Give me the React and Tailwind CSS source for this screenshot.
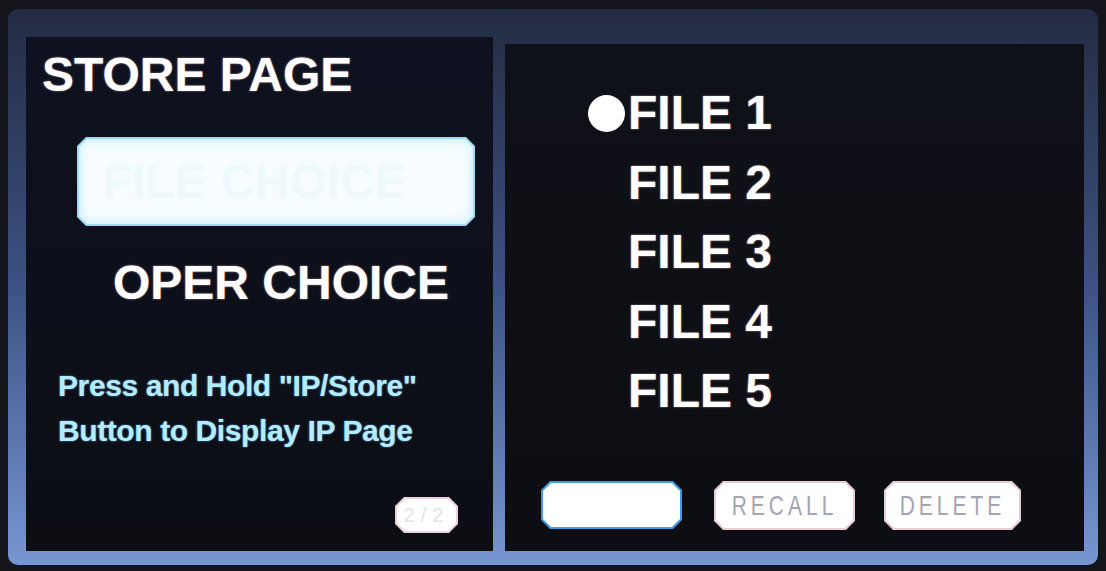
import React from 'react';

const files = ['FILE 1', 'FILE 2', 'FILE 3', 'FILE 4', 'FILE 5'];

const glow = '[text-shadow:0_0_2px_rgba(255,190,200,0.7)]';

// chamfered box: outer edge colour + inner fill
const Chamfer = ({ edge, fill, className, children }) => (
  <div
    className={`${edge} p-[2px] [clip-path:polygon(9px_0,calc(100%_-_9px)_0,100%_9px,100%_calc(100%_-_9px),calc(100%_-_9px)_100%,9px_100%,0_calc(100%_-_9px),0_9px)] ${className}`}
  >
    <div
      className={`${fill} w-full h-full flex items-center justify-center [clip-path:polygon(8px_0,calc(100%_-_8px)_0,100%_8px,100%_calc(100%_-_8px),calc(100%_-_8px)_100%,8px_100%,0_calc(100%_-_8px),0_8px)]`}
    >
      {children}
    </div>
  </div>
);

const App = () => {
  return (
    <div className="w-[1106px] h-[571px] bg-[#13151b] pt-[9px] pl-[8px] pr-[8px] pb-[6px] font-['Liberation_Sans',Arial,sans-serif]">
      <div className="w-full h-full rounded-[10px] bg-gradient-to-b from-[#232c43] via-[#3d5283] to-[#7896d2] pt-[28px] pl-[18px] pr-[14px] pb-[14px] flex gap-[12px]">
        {/* left panel */}
        <div className="w-[467px] h-full bg-gradient-to-b from-[#0e1220] to-[#0c0e14] flex flex-col">
          <div className={`pl-[16px] pt-[14px] text-[48px] leading-[48px] font-bold text-white ${glow}`}>
            STORE PAGE
          </div>

          <div className="pl-[51px] mt-[38px]">
            <Chamfer
              edge="bg-[#9ddcf0]"
              fill="bg-[#f7fdff] shadow-[inset_0_0_12px_#b4e8f8]"
              className="w-[398px] h-[89px]"
            >
              <span className="text-[48px] leading-[48px] font-bold text-[#eef9fc] -ml-[42px]">
                FILE CHOICE
              </span>
            </Chamfer>
          </div>

          <div className={`pl-[87px] mt-[33px] text-[48px] leading-[48px] font-bold text-white ${glow}`}>
            OPER CHOICE
          </div>

          <div className="pl-[32px] mt-[56px] text-[30px] leading-[45px] font-bold text-[#b4ecff] tracking-[-0.4px] [text-shadow:0_0_2px_rgba(120,200,255,0.8)]">
            <div>Press and Hold "IP/Store"</div>
            <div>Button to Display IP Page</div>
          </div>

          <div className="mt-auto flex justify-end pr-[35px] pb-[18px]">
            <Chamfer edge="bg-[#ecd0da]" fill="bg-white" className="w-[63px] h-[36px]">
              <span className="text-[20px] text-[#e2e2e8] tracking-[6px]">2/2</span>
            </Chamfer>
          </div>
        </div>

        {/* right panel */}
        <div className="flex-1 mt-[7px] bg-gradient-to-b from-[#0f1118] to-[#0d0e13] flex flex-col">
          <div className="flex flex-col pt-[45px] gap-[21.5px]">
            {files.map((f, i) => (
              <div key={f} className="flex items-center h-[48px]">
                <div className="w-[123px] flex justify-end pr-[3px]">
                  {i === 0 && <div className="w-[37px] h-[37px] rounded-full bg-white" />}
                </div>
                <span className={`text-[48px] leading-[48px] font-bold text-white ${glow}`}>{f}</span>
              </div>
            ))}
          </div>

          <div className="mt-auto flex pl-[36px] pb-[21px]">
            <Chamfer edge="bg-[#3c9ae8]" fill="bg-white" className="w-[141px] h-[48px]">
              <span className="text-[22px] text-white">STORE</span>
            </Chamfer>
            <Chamfer edge="bg-[#e8ccd4]" fill="bg-white" className="w-[141px] h-[49px] ml-[32px]">
              <span className="text-[21px] font-light text-[#a4a4b2] tracking-[4px] scale-y-[1.3]">RECALL</span>
            </Chamfer>
            <Chamfer edge="bg-[#e8ccd4]" fill="bg-white" className="w-[137px] h-[49px] ml-[29px]">
              <span className="text-[21px] font-light text-[#a4a4b2] tracking-[4px] scale-y-[1.3]">DELETE</span>
            </Chamfer>
          </div>
        </div>
      </div>
    </div>
  );
};

export default App;
